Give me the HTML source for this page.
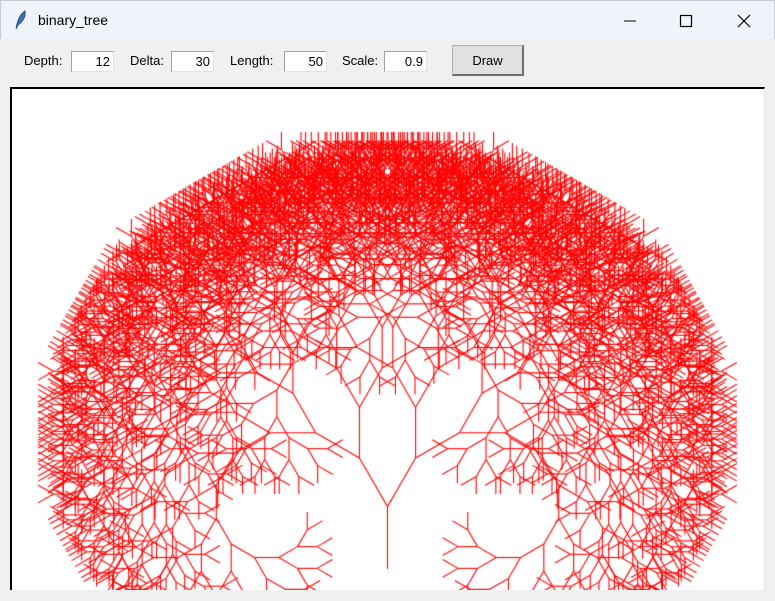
<!DOCTYPE html>
<html><head><meta charset="utf-8"><style>
*{margin:0;padding:0;box-sizing:border-box}
body{width:775px;height:601px;background:#f0f0f0;position:relative;overflow:hidden;font-family:"Liberation Sans",sans-serif;font-size:13px;color:#000}
#title{position:absolute;left:0;top:0;width:775px;height:39px;background:#eff4fa;border:1px solid #c8ccd2;border-bottom:none}
#title .t{position:absolute;left:37px;top:11px;font-size:14px}
.lbl{position:absolute;top:53px}
.ent{position:absolute;top:51px;height:21px;background:#fff;border:1px solid #a0a0a0;border-right-color:#e3e3e3;border-bottom-color:#e3e3e3;text-align:right;padding:2px 3px 0 0}
#btn{position:absolute;left:452px;top:45px;width:72px;height:31px;background:#e1e1e1;border:1px solid #adadad;border-right:2px solid #707070;border-bottom:2px solid #707070;text-align:center;padding-top:7px}
#cv{position:absolute;left:10px;top:87px;width:755px;height:514px;border:2px solid #000;border-right:1px solid #e3e3e3;background:#fff}
</style></head><body>
<div id="title">
<svg style="position:absolute;left:12px;top:9px" width="14" height="20" viewBox="0 0 14 20"><path d="M3 19 C4 12 6 5 12 1 C13 6 10 12 5 15 Z" fill="#3b6fb6" stroke="#1d3f7a" stroke-width="0.8"/></svg>
<span class="t">binary_tree</span>
<svg style="position:absolute;left:620px;top:12px" width="140" height="16"><line x1="3" y1="8" x2="15" y2="8" stroke="#000"/><rect x="59.5" y="2.5" width="11" height="11" fill="none" stroke="#000" stroke-width="1.2"/><path d="M117 2 L129 14 M129 2 L117 14" stroke="#000" stroke-width="1.2"/></svg>
</div>
<span class="lbl" style="left:24px">Depth:</span><div class="ent" style="left:71px;width:43px">12</div>
<span class="lbl" style="left:130px">Delta:</span><div class="ent" style="left:171px;width:43px">30</div>
<span class="lbl" style="left:230px">Length:</span><div class="ent" style="left:284px;width:43px">50</div>
<span class="lbl" style="left:342px">Scale:</span><div class="ent" style="left:384px;width:43px">0.9</div>
<div id="btn">Draw</div>
<div id="cv"><canvas id="c" width="751" height="503"></canvas></div>
<div style="position:absolute;left:0;top:590px;width:775px;height:11px;background:#f0f0f0"></div>
<script>
var c=document.getElementById('c').getContext('2d');
c.strokeStyle='#ff0000';c.lineWidth=1.1;
var ox=12,oy=89;
function d(x,y,a,l,n){var r=a*Math.PI/180;var x2=x+l*Math.sin(r),y2=y-l*Math.cos(r);
c.beginPath();c.moveTo(x-ox,y-oy);c.lineTo(x2-ox,y2-oy);c.stroke();
if(n>0){d(x2,y2,a-30,l*0.9,n-1);d(x2,y2,a+30,l*0.9,n-1);}}
d(387.5,569,0,62.4,12);
</script>
</body></html>
